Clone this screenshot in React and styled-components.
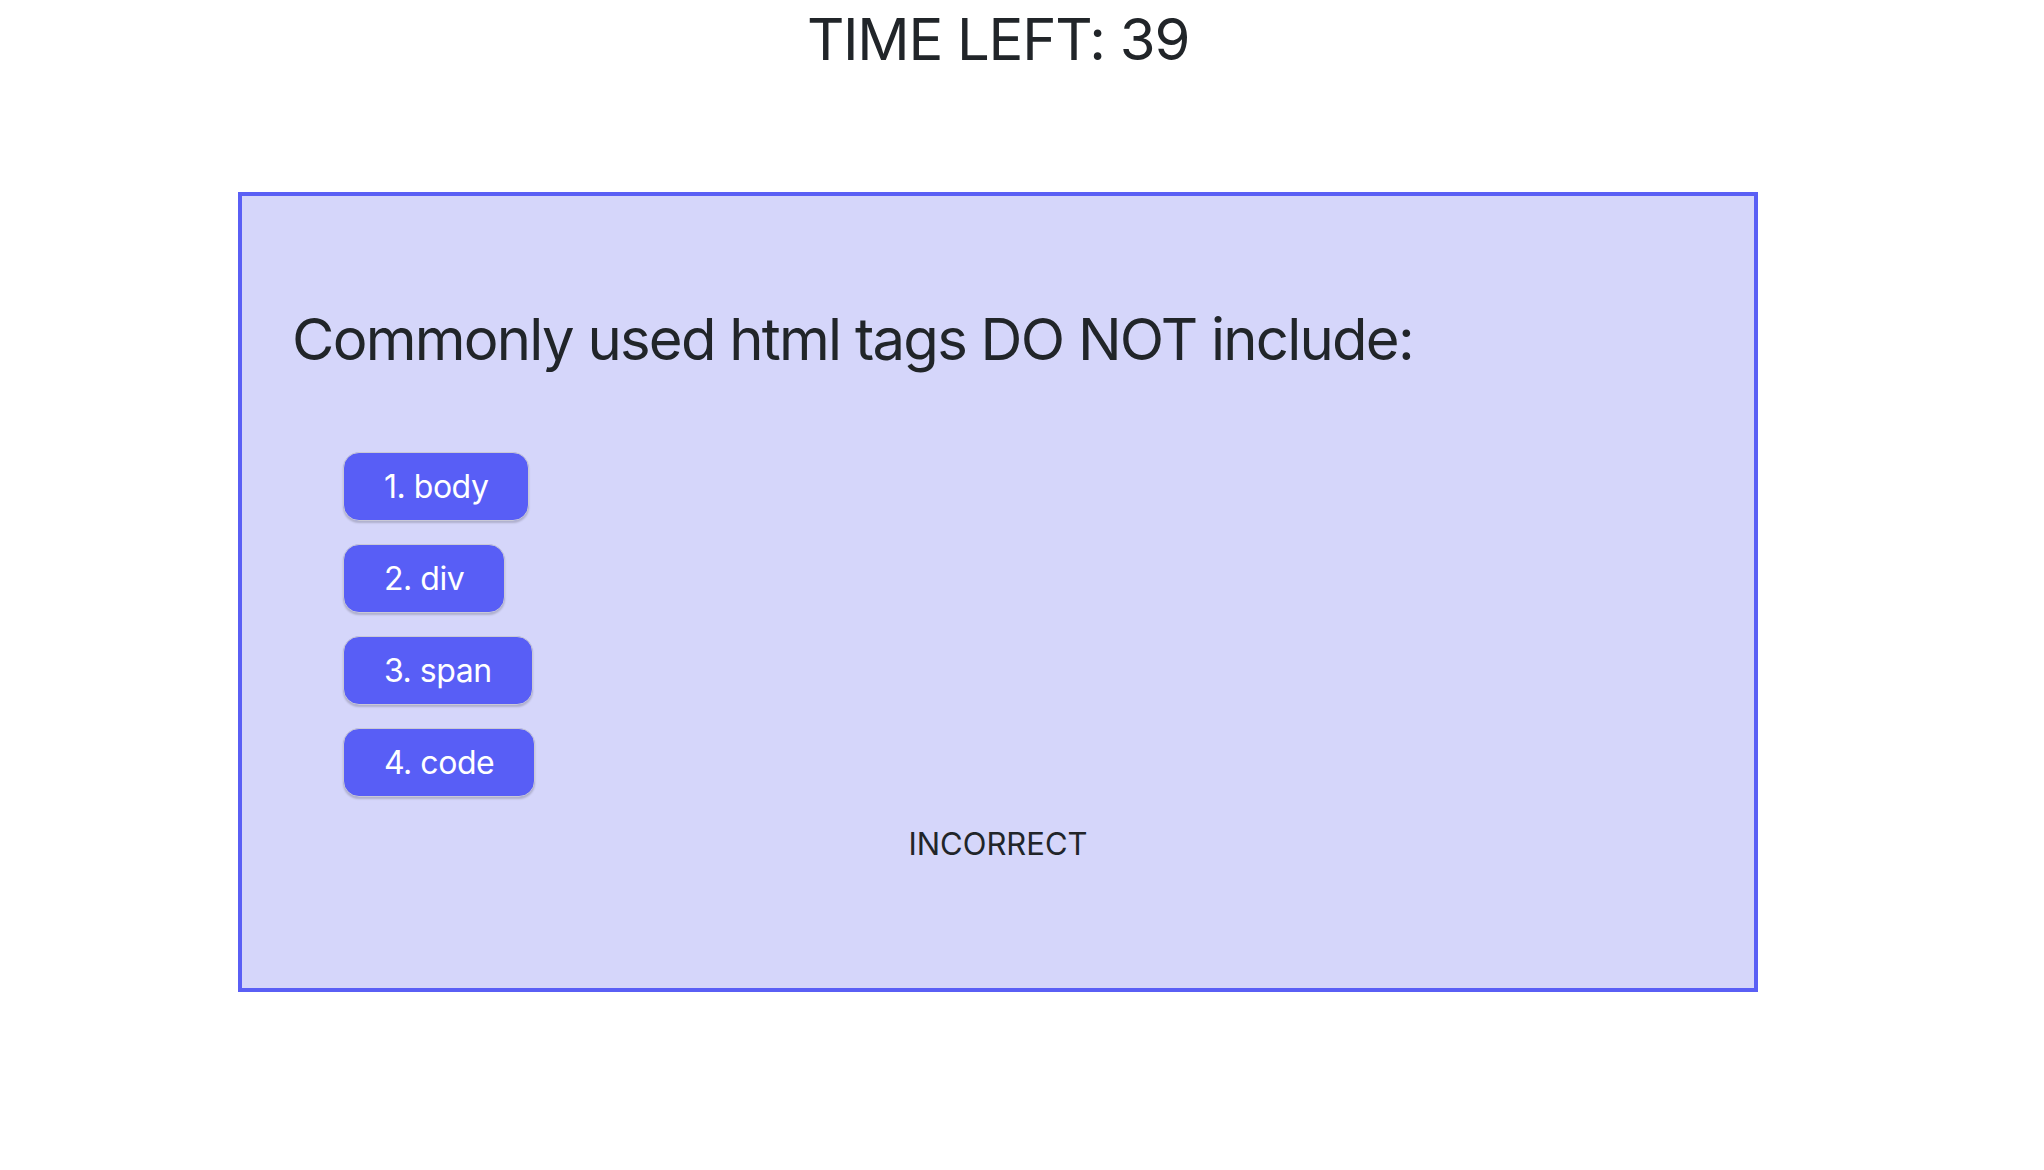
import React, { useState } from "react";
import styled, { createGlobalStyle } from "styled-components";

const GlobalStyle = createGlobalStyle`
  body {
    margin: 0;
    background: #ffffff;
    font-family: Inter, "Noto Sans", "Liberation Sans", sans-serif;
    color: #212529;
  }
`;

const Page = styled.div`
  width: 1996px;
  padding-top: 4px;
  display: flex;
  flex-direction: column;
  align-items: center;
`;

const Timer = styled.h1`
  margin: 0;
  font-size: 58px;
  font-weight: 400;
  line-height: 70px;
  letter-spacing: -0.022em;
`;

const QuizCard = styled.section`
  box-sizing: border-box;
  width: 1520px;
  height: 800px;
  margin-top: 118px;
  background-color: #d5d6fa;
  border: 4px solid #5a5ff5;
  padding: 108px 50px 0 50px;
  display: flex;
  flex-direction: column;
`;

const Question = styled.h2`
  margin: 0;
  font-size: 58px;
  font-weight: 400;
  line-height: 70px;
  letter-spacing: -0.03em;
`;

const AnswerList = styled.div`
  display: flex;
  flex-direction: column;
  align-items: flex-start;
  gap: 23px;
  margin-top: 78px;
  padding-left: 51px;
`;

const AnswerButton = styled.button`
  font-family: inherit;
  font-size: 32px;
  line-height: 39px;
  letter-spacing: -0.015em;
  color: #ffffff;
  background-color: #585ef6;
  border: 1px solid #c9c9d6;
  border-radius: 16px;
  padding: 14px 40px;
  box-shadow: 0 2px 2px rgba(0, 0, 0, 0.18);
  cursor: pointer;
`;

const Feedback = styled.p`
  margin: 28px 0 0;
  text-align: center;
  font-size: 31px;
  line-height: 37px;
`;

const answers = ["1. body", "2. div", "3. span", "4. code"];

function App() {
  const [timeLeft] = useState(39);

  return (
    <Page>
      <GlobalStyle />
      <Timer>TIME LEFT: {timeLeft}</Timer>
      <QuizCard>
        <Question>Commonly used html tags DO NOT include:</Question>
        <AnswerList>
          {answers.map((a) => (
            <AnswerButton key={a}>{a}</AnswerButton>
          ))}
        </AnswerList>
        <Feedback>INCORRECT</Feedback>
      </QuizCard>
    </Page>
  );
}

export default App;
